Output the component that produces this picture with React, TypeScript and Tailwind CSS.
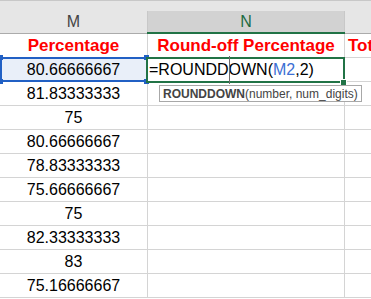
import React from "react";

const values = [
  "80.66666667",
  "81.83333333",
  "75",
  "80.66666667",
  "78.83333333",
  "75.66666667",
  "75",
  "82.33333333",
  "83",
  "75.16666667",
];

export default function App() {
  return (
    <div
      className="relative w-[371px] h-[299px] overflow-hidden bg-white"
      style={{ fontFamily: '"Liberation Sans", Arial, sans-serif' }}
    >
      {/* top band */}
      <div className="h-[11px] bg-[#e6e6e6] border-t border-[#c8c8c8]" />
      {/* column headers */}
      <div className="flex h-[23px] border-b border-[#ababab]">
        <div className="w-[148px] shrink-0 bg-[#e6e6e6] border-r border-[#c8c8c8] flex items-center justify-center text-[16px] text-[#444]">
          M
        </div>
        <div className="w-[197px] shrink-0 bg-[#d2d2d2] border-r border-[#c8c8c8] flex items-center justify-center text-[16px] text-[#1d6b42]">
          N
        </div>
        <div className="flex-1 bg-[#e6e6e6]" />
      </div>
      {/* rows */}
      <div className="flex h-[24px] border-b border-[#d4d4d4]">
        <div className="w-[148px] shrink-0 border-r border-[#d4d4d4] flex items-center justify-center text-[17px] font-bold text-[#ff0000]">
          Percentage
        </div>
        <div className="w-[197px] shrink-0 border-r border-[#d4d4d4] flex items-center justify-center text-[17px] font-bold text-[#ff0000] whitespace-nowrap">
          Round-off Percentage
        </div>
        <div className="flex-1 flex items-center pl-[3px] text-[17px] font-bold text-[#ff0000] whitespace-nowrap overflow-hidden">
          Total
        </div>
      </div>
      {values.map((v, i) => (
        <div key={i} className="flex h-[24px] border-b border-[#d4d4d4]">
          <div
            className={
              "w-[148px] shrink-0 border-r border-[#d4d4d4] flex items-center justify-center text-[16px] text-black " +
              (i === 0 ? "bg-[#e9eff9]" : "")
            }
          >
            {v}
          </div>
          <div className="w-[197px] shrink-0 border-r border-[#d4d4d4]" />
          <div className="flex-1" />
        </div>
      ))}

      {/* green bar under N header */}
      <div className="absolute left-[147px] top-[32px] w-[198px] h-[2px] bg-[#217346]" />

      {/* M2 reference border (blue) */}
      <div className="absolute left-0 top-[57px] w-[148px] h-[25px] border-2 border-[#2160c4]" />
      <div className="absolute left-[-2px] top-[55px] w-[5px] h-[5px] bg-[#2160c4]" />
      <div className="absolute left-[-2px] top-[79px] w-[5px] h-[5px] bg-[#2160c4]" />
      <div className="absolute left-[144px] top-[55px] w-[5px] h-[5px] bg-[#2160c4]" />
      <div className="absolute left-[144px] top-[79px] w-[5px] h-[5px] bg-[#2160c4]" />

      {/* N2 active cell */}
      <div className="absolute left-[146px] top-[57px] w-[199px] h-[26px] border-2 border-[#217346] bg-white flex items-center pl-[1px] text-[16px] text-black whitespace-nowrap">
        <span>=ROUNDD</span>
        <span className="relative">
          <span className="absolute left-0 top-[-2px] bottom-[-2px] w-px bg-[#6a6a6a]" />
          OWN(
        </span>
        <span className="text-[#3c6fd4]">M2</span>
        <span>,2)</span>
      </div>
      <div className="absolute left-[341px] top-[80px] w-[5px] h-[5px] bg-[#217346] outline outline-1 outline-white" />

      {/* tooltip */}
      <div className="absolute left-[159px] top-[85px] h-[17px] border border-[#a8a8a8] bg-white flex items-center px-[3px] text-[12px] text-[#444] whitespace-nowrap">
        <span className="font-bold">ROUNDDOWN</span>
        <span>(number, num_digits)</span>
      </div>
    </div>
  );
}
